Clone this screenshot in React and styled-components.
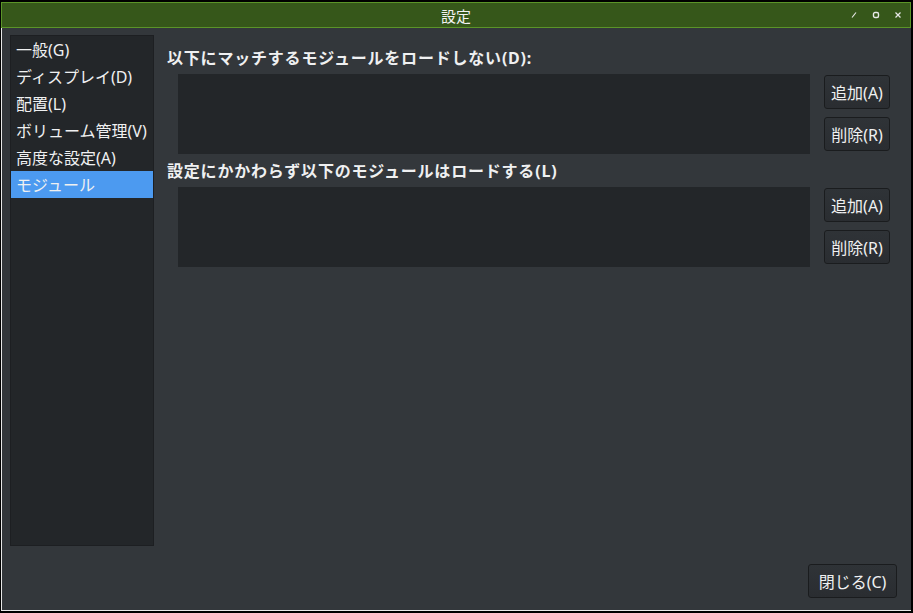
import React from "react";
import styled, {createGlobalStyle} from "styled-components";

const GlobalStyle = createGlobalStyle`
    html, body {
        margin: 0;
        padding: 0;
        background: #000;
    }
    body {
        font-family: "Noto Sans", "Noto Sans CJK JP", sans-serif;
    }
`

const Frame = styled.div`
    width: 913px;
    height: 613px;
    box-sizing: border-box;
    display: flex;
    flex-direction: column;
    background: #000;
    padding: 2px 2px 2px 1px;
`

const TitleBar = styled.div`
    height: 26px;
    box-sizing: border-box;
    flex-shrink: 0;
    background: #36571a;
    border: 1px solid #5b9428;
    position: relative;
    display: flex;
    align-items: center;
    justify-content: center;
    color: #f2f2f2;
    font-size: 15px;
    font-family: "Noto Sans CJK JP", sans-serif;
`

const TitleControls = styled.div`
    position: absolute;
    right: 8px;
    top: 0;
    bottom: 0;
    display: flex;
    align-items: center;
    gap: 14px;
`

const Window = styled.div`
    flex: 1;
    display: flex;
    flex-direction: column;
    background: #33373b;
    border-left: 1px solid #e8e8e8;
    border-bottom: 1px solid #e8e8e8;
    padding: 7px 14px 12px 8px;
    gap: 18px;
    min-height: 0;
    color: #eff0f1;
    font-family: "Noto Sans", "Noto Sans CJK JP", sans-serif;
    font-size: 16px;
`

const Body = styled.div`
    flex: 1;
    display: flex;
    min-height: 0;
`

const Sidebar = styled.div`
    width: 144px;
    box-sizing: border-box;
    background: #232629;
    border: 1px solid #1d1f22;
    display: flex;
    flex-direction: column;
`

const NavItem = styled.div`
    height: 27px;
    line-height: 28px;
    padding-left: 5px;
    white-space: nowrap;
    background: ${p => p.$active ? "#4c9af0" : "transparent"};
    color: #eff0f1;
`

const Main = styled.div`
    flex: 1;
    display: flex;
    flex-direction: column;
    padding: 13px 7px 0 13px;
`

const Label = styled.div`
    font-weight: bold;
    line-height: 20px;
    margin-bottom: 6px;
    white-space: nowrap;
    letter-spacing: 0.8px;
`

const ListRow = styled.div`
    display: flex;
    gap: 14px;
    padding-left: 11px;
    margin-bottom: 7px;
`

const ListBox = styled.div`
    flex: 1;
    height: 80px;
    background: #232629;
`

const ButtonColumn = styled.div`
    display: flex;
    flex-direction: column;
    gap: 8px;
    padding-top: 1px;
`

const Button = styled.button`
    width: ${p => p.$wide ? "89px" : "66px"};
    height: 34px;
    box-sizing: border-box;
    border: 1px solid #1a1c1e;
    border-radius: 3px;
    background: linear-gradient(#2f3337, #2a2d31);
    color: #eff0f1;
    font-family: "Noto Sans", "Noto Sans CJK JP", sans-serif;
    font-size: 16px;
    padding: 0;
`

const Footer = styled.div`
    display: flex;
    justify-content: flex-end;
`

const navItems = ["一般(G)", "ディスプレイ(D)", "配置(L)", "ボリューム管理(V)", "高度な設定(A)", "モジュール"];

export default function App() {
    return (
        <Frame>
            <GlobalStyle/>
            <TitleBar>
                設定
                <TitleControls>
                    <svg width="8" height="8" viewBox="0 0 8 8">
                        <path d="M2 6.5 L6 1.5" stroke="#e8e8e8" strokeWidth="1.2"/>
                    </svg>
                    <svg width="8" height="8" viewBox="0 0 8 8">
                        <rect x="1.5" y="1.5" width="5" height="5" rx="1.5" fill="none" stroke="#e8e8e8" strokeWidth="1.4"/>
                    </svg>
                    <svg width="8" height="8" viewBox="0 0 8 8">
                        <path d="M1.5 1.5 L6.5 6.5 M6.5 1.5 L1.5 6.5" stroke="#e8e8e8" strokeWidth="1.2"/>
                    </svg>
                </TitleControls>
            </TitleBar>
            <Window>
                <Body>
                    <Sidebar>
                        {navItems.map((item, key) => (
                            <NavItem key={key} $active={key === 5}>{item}</NavItem>
                        ))}
                    </Sidebar>
                    <Main>
                        <Label>以下にマッチするモジュールをロードしない(D):</Label>
                        <ListRow>
                            <ListBox/>
                            <ButtonColumn>
                                <Button>追加(A)</Button>
                                <Button>削除(R)</Button>
                            </ButtonColumn>
                        </ListRow>
                        <Label>設定にかかわらず以下のモジュールはロードする(L)</Label>
                        <ListRow>
                            <ListBox/>
                            <ButtonColumn>
                                <Button>追加(A)</Button>
                                <Button>削除(R)</Button>
                            </ButtonColumn>
                        </ListRow>
                    </Main>
                </Body>
                <Footer>
                    <Button $wide>閉じる(C)</Button>
                </Footer>
            </Window>
        </Frame>
    );
}
